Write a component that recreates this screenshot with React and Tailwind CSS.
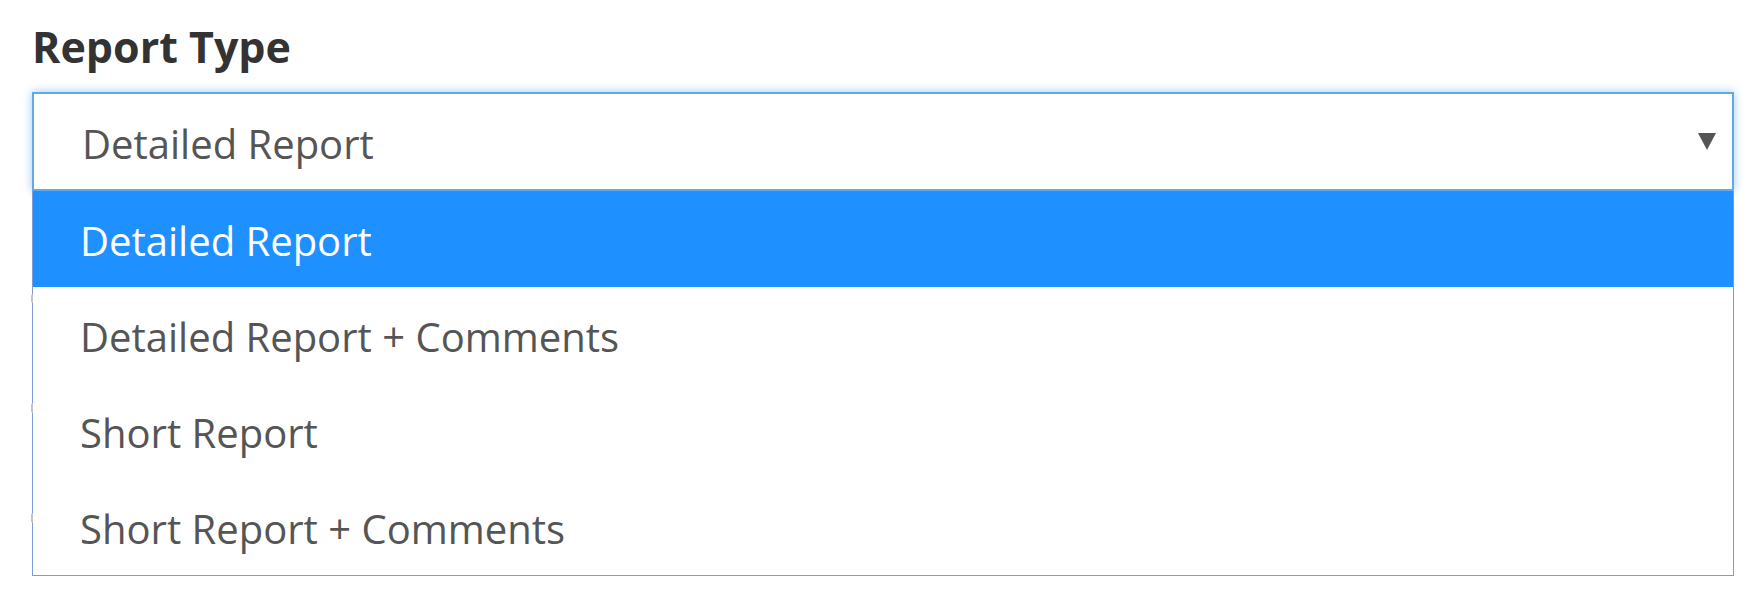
const options = [
  'Detailed Report',
  'Detailed Report + Comments',
  'Short Report',
  'Short Report + Comments',
];

export default function App() {
  const selected = options[0];

  return (
    <div className="min-h-[591px] bg-white font-['Open_Sans',sans-serif]">
      <div className="ml-[32px] w-[1702px] pt-[18px]">
        <label className="block text-[43px] leading-[57px] font-bold text-[#333333]">Report Type</label>

        <div className="relative mt-[17px]">
          {/* closed select, focused */}
          <div className="flex h-[99px] items-start justify-between border-2 border-[#62a9e6] bg-white shadow-[0_0_9px_rgba(102,175,233,0.65)]">
            <span className="pl-[48px] pt-[5px] text-[40px] leading-[90px] text-[#555555]">{selected}</span>
            <svg width="18" height="17" viewBox="0 0 18 17" className="mr-[16px] mt-[39px]">
              <polygon points="0,0 18,0 9,17" fill="#555555" />
            </svg>
          </div>

          {/* open list */}
          <div className="relative border-x border-b border-[#7b9cd8] bg-white">
            {options.map((opt) => (
              <div
                key={opt}
                className={`h-[96px] pl-[47px] pt-[3px] text-[40px] leading-[93px] ${opt === selected ? 'bg-[#1e90ff] text-white' : 'text-[#555555]'}`}
              >
                {opt}
              </div>
            ))}
            {/* edges of controls peeking out from behind the list */}
            <span className="absolute -left-[2px] top-[103px] h-[9px] w-[2px] rounded-l-full bg-[#c4c4c4]" />
            <span className="absolute -left-[2px] top-[212px] h-[10px] w-[2px] rounded-l-full bg-[#c4c4c4]" />
            <span className="absolute -left-[2px] top-[322px] h-[10px] w-[2px] rounded-l-full bg-[#c4c4c4]" />
          </div>
        </div>
      </div>
    </div>
  );
}
